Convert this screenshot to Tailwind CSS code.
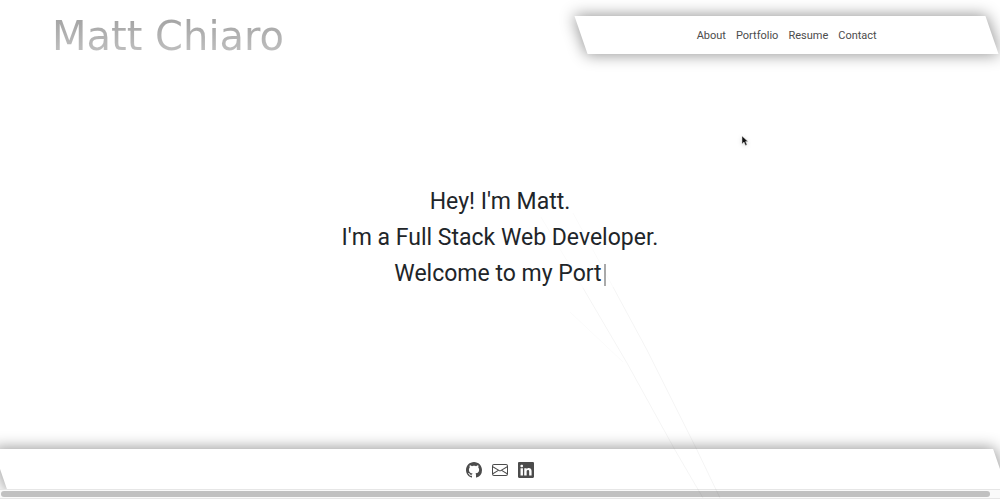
<!DOCTYPE html>
<html lang="en">
<head>
<meta charset="utf-8">
<meta name="viewport" content="width=device-width, initial-scale=1">
<title>Matt Chiaro</title>
<script src="https://cdn.jsdelivr.net/npm/@tailwindcss/browser@4"></script>
</head>
<body class="relative flex h-screen flex-col overflow-hidden bg-white font-['Roboto','Liberation_Sans',sans-serif] text-[#212529]">

<header class="flex items-start justify-between pt-4 pr-2">
  <a href="#" class="bg-linear-to-b from-[#a2a2a2] to-[#c2c2c2] bg-clip-text pl-[52px] font-['DejaVu_Sans',sans-serif] text-[40px] leading-10 text-transparent">Matt Chiaro</a>
  <nav aria-label="Main" class="relative w-[41.4%]">
    <div class="absolute inset-0 skew-x-[19deg] bg-white shadow-[0_0_14px_1px_rgba(0,0,0,0.42)]"></div>
    <ul class="relative flex h-[38px] items-center justify-center gap-[10px] pt-0.5 text-[11px] leading-4 text-[#4c4c4c]">
      <li><a href="#about">About</a></li>
      <li><a href="#portfolio">Portfolio</a></li>
      <li><a href="#resume">Resume</a></li>
      <li><a href="#contact">Contact</a></li>
    </ul>
  </nav>
</header>

<main class="flex flex-1 flex-col items-center pt-[128px]">
  <h1 class="text-center text-[23px] leading-9">
    Hey! I'm Matt.<br>
    I'm a Full Stack Web Developer.<br>
    Welcome to my Port<span class="ml-[2px] inline-block h-[22px] w-[2px] bg-[#aaa] align-middle"></span>
  </h1>
</main>

<footer class="relative">
  <div class="absolute inset-0 skew-x-[19deg] bg-white shadow-[0_0_14px_1px_rgba(0,0,0,0.42)]"></div>
  <div class="relative flex h-10 items-center justify-center gap-[10px] pt-0.5 text-[#4c4c4c]">
    <a href="#github" aria-label="GitHub"><svg class="size-4" viewBox="0 0 16 16" fill="currentColor"><path d="M8 0C3.58 0 0 3.58 0 8c0 3.54 2.29 6.53 5.47 7.59.4.07.55-.17.55-.38 0-.19-.01-.82-.01-1.49-2.01.37-2.53-.49-2.69-.94-.09-.23-.48-.94-.82-1.13-.28-.15-.68-.52-.01-.53.63-.01 1.08.58 1.23.82.72 1.21 1.87.87 2.33.66.07-.52.28-.87.51-1.07-1.78-.2-3.64-.89-3.64-3.95 0-.87.31-1.59.82-2.15-.08-.2-.36-1.02.08-2.12 0 0 .67-.21 2.2.82.64-.18 1.32-.27 2-.27s1.36.09 2 .27c1.53-1.04 2.2-.82 2.2-.82.44 1.1.16 1.92.08 2.12.51.56.82 1.27.82 2.15 0 3.07-1.87 3.75-3.65 3.95.29.25.54.73.54 1.48 0 1.07-.01 1.93-.01 2.2 0 .21.15.46.55.38A8.01 8.01 0 0 0 16 8c0-4.42-3.58-8-8-8"/></svg></a>
    <a href="#email" aria-label="Email"><svg class="size-4" viewBox="0 0 16 16" fill="currentColor"><path d="M0 4a2 2 0 0 1 2-2h12a2 2 0 0 1 2 2v8a2 2 0 0 1-2 2H2a2 2 0 0 1-2-2zm2-1a1 1 0 0 0-1 1v.217l7 4.2 7-4.2V4a1 1 0 0 0-1-1zm13 2.383-4.708 2.825L15 11.105zm-.034 6.876-5.64-3.471L8 9.583l-1.326-.795-5.64 3.47A1 1 0 0 0 2 13h12a1 1 0 0 0 .966-.741M1 11.105l4.708-2.897L1 5.383z"/></svg></a>
    <a href="#linkedin" aria-label="LinkedIn"><svg class="size-4" viewBox="0 0 16 16" fill="currentColor"><path d="M0 1.146C0 .513.526 0 1.175 0h13.65C15.474 0 16 .513 16 1.146v13.708c0 .633-.526 1.146-1.175 1.146H1.175C.526 16 0 15.487 0 14.854zm4.943 12.248V6.169H2.542v7.225zm-1.2-8.212c.837 0 1.358-.554 1.358-1.248-.015-.709-.52-1.248-1.342-1.248S2.4 3.226 2.4 3.934c0 .694.521 1.248 1.327 1.248zm4.908 8.212V9.359c0-.216.016-.432.08-.586.173-.431.568-.878 1.232-.878.869 0 1.216.662 1.216 1.634v3.865h2.401V9.25c0-2.22-1.184-3.252-2.764-3.252-1.274 0-1.845.7-2.165 1.193v.025h-.016l.016-.025V6.169h-2.4c.03.678 0 7.225 0 7.225z"/></svg></a>
  </div>
</footer>

<!-- horizontal scroll track -->
<div class="relative h-[10px] border-y border-[#e6e6e6] bg-[#fafafa] pt-px pr-[10px] pl-px">
  <div class="h-[6px] rounded-full bg-[#c1c1c1]"></div>
</div>

<!-- faint background strands -->
<svg class="pointer-events-none absolute bottom-0 left-1/2 h-[289px] w-[230px]" viewBox="500 210 230 289" fill="none" stroke="#000" aria-hidden="true">
  <path stroke-opacity=".045" d="M583 288 627 363 675 450 703 498M613 287 647 350 697 450 720 498"/>
  <path stroke-opacity=".02" d="M541 217 583 288M573 213 613 287M570 312 623 362"/>
</svg>

<!-- pointer -->
<svg class="pointer-events-none absolute top-[135px] left-[741px] h-[13px] w-[8px] drop-shadow-sm" viewBox="0 0 8 13" aria-hidden="true">
  <path d="M1 1v8l2-2 1.500 3.500 1.500-.7L4.600 6.600H7z" fill="#111" stroke="#ddd" stroke-width=".5"/>
</svg>
</body>
</html>
